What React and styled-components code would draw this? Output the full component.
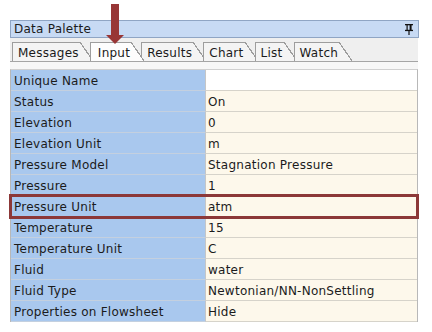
import React from "react";
import styled, { createGlobalStyle } from "styled-components";

const GlobalStyle = createGlobalStyle`
  html, body { margin: 0; background: #fff; }
  body {
    font-family: "DejaVu Sans", Verdana, sans-serif;
    font-size: 12px;
    letter-spacing: 0.25px;
    color: #1b1b1b;
  }
`;

const Page = styled.div`
  position: relative;
  width: 432px;
  height: 332px;
  padding: 20px 0 0 10px;
  box-sizing: border-box;
  overflow: hidden;
`;

const Palette = styled.div`
  width: 409px;
  display: flex;
  flex-direction: column;
`;

const TitleBar = styled.div`
  height: 18px;
  box-sizing: border-box;
  border: 1px solid #8fa5c4;
  background: #c7daf4;
  display: flex;
  align-items: center;
  justify-content: space-between;
  padding: 0 5px 0 3px;
`;

const TabStrip = styled.div`
  display: flex;
  align-items: flex-end;
  height: 23px;
  box-sizing: border-box;
  padding-left: 2px;
  width: 408px;
  background: #efefef;
`;

const Tab = styled.div`
  position: relative;
  z-index: ${(p) => (p.$active ? 2 : 1)};
  height: 19px;
  box-sizing: border-box;
  display: flex;
  align-items: center;
  padding: 1px 1px 0 ${(p) => (p.$active ? 7 : 5)}px;
  margin-right: 10px;
  border-left: 1px solid #9d9d9d;
  border-top: 1px solid #9d9d9d;
  background: ${(p) => (p.$active ? "#fdfdfd" : "#f4f4f4")};

  &::after {
    content: "";
    position: absolute;
    top: -1px;
    bottom: 0;
    right: -13px;
    width: 13px;
    background: linear-gradient(
      to top right,
      ${(p) => (p.$active ? "#fdfdfd" : "#f4f4f4")} calc(50% - 0.6px),
      #9d9d9d calc(50% - 0.6px),
      #9d9d9d calc(50% + 0.6px),
      transparent calc(50% + 0.6px)
    );
  }
`;

const TabBody = styled.div`
  width: 408px;
  border-top: 1px solid #a5a5a5;
  background: #f7f7f7;
  padding-top: 7px;
`;

const Grid = styled.div`
  border: 1px solid #b8b8b8;
  border-top-color: #d0d0d0;
  border-bottom: none;
`;

const Row = styled.div`
  position: relative;
  display: grid;
  grid-template-columns: 195px 1fr;
  height: 21px;
  outline: ${(p) => (p.$highlight ? "3px solid #8c3838" : "none")};
  outline-offset: -1px;
  z-index: ${(p) => (p.$highlight ? 1 : 0)};
`;

const Label = styled.div`
  display: flex;
  align-items: center;
  padding: 2px 0 0 3px;
  background: #a9c8ee;
  border-right: 1px solid #c6c6c6;
  border-bottom: 1px solid #c4d0df;
`;

const Value = styled.div`
  display: flex;
  align-items: center;
  padding: 2px 0 0 2px;
  background: ${(p) => (p.$blank ? "#ffffff" : "#fdf8eb")};
  border-bottom: 1px solid #d6d3ca;
`;

const ArrowMark = styled.svg`
  position: absolute;
  left: 105px;
  top: 4px;
  z-index: 5;
`;

const rows = [
  ["Unique Name", ""],
  ["Status", "On"],
  ["Elevation", "0"],
  ["Elevation Unit", "m"],
  ["Pressure Model", "Stagnation Pressure"],
  ["Pressure", "1"],
  ["Pressure Unit", "atm"],
  ["Temperature", "15"],
  ["Temperature Unit", "C"],
  ["Fluid", "water"],
  ["Fluid Type", "Newtonian/NN-NonSettling"],
  ["Properties on Flowsheet", "Hide"],
];

const tabs = ["Messages", "Input", "Results", "Chart", "List", "Watch"];

const PinIcon = () => (
  <svg width="8" height="11" viewBox="0 0 8 11">
    <rect x="0" y="0" width="8" height="1.3" fill="#111" />
    <rect x="1.5" y="1" width="1.2" height="5" fill="#111" />
    <rect x="4.6" y="1" width="2" height="5" fill="#111" />
    <rect x="0" y="5.8" width="8" height="1.3" fill="#111" />
    <rect x="3.4" y="7" width="1.2" height="4" fill="#111" />
  </svg>
);

export default function App() {
  return (
    <Page>
      <GlobalStyle />
      <ArrowMark width="20" height="41" viewBox="0 0 20 41">
        <rect x="6" y="0" width="8" height="32" fill="#983636" />
        <polygon points="1,31 19,31 10,40" fill="#983636" />
      </ArrowMark>
      <Palette>
        <TitleBar>
          <span>Data Palette</span>
          <PinIcon />
        </TitleBar>
        <TabStrip>
          {tabs.map((t) => (
            <Tab key={t} $active={t === "Input"}>
              {t}
            </Tab>
          ))}
        </TabStrip>
        <TabBody>
          <Grid>
            {rows.map(([label, value], i) => (
              <Row key={label} $highlight={label === "Pressure Unit"}>
                <Label>{label}</Label>
                <Value $blank={i === 0}>{value}</Value>
              </Row>
            ))}
          </Grid>
        </TabBody>
      </Palette>
    </Page>
  );
}
